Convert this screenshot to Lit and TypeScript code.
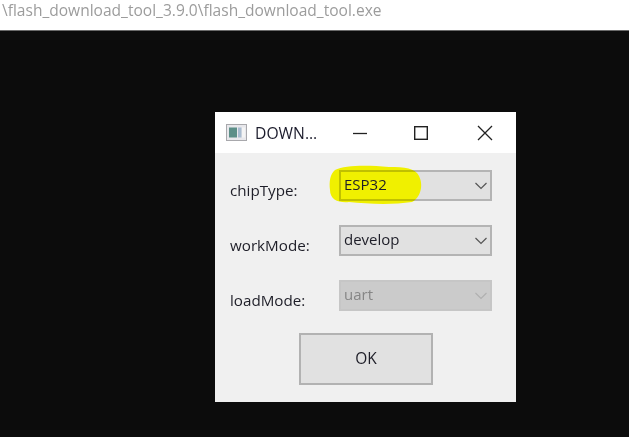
import { LitElement, html, css } from "lit";
import { customElement } from "lit/decorators.js";

const chevron = (color: string) => html`<svg class="chev" width="14" height="8" viewBox="0 0 14 8" fill="none"><path d="M1.5 1 L7 6.5 L12.5 1" stroke=${color} stroke-width="1.2"/></svg>`;

@customElement("app-root")
export class AppRoot extends LitElement {
  static styles = css`
    :host { display: block; width: 629px; height: 437px; overflow: hidden; background: #0c0c0c; font-family: "Open Sans", "Noto Sans", sans-serif; }
    .addr { height: 30px; background: #fff; border-bottom: 1px solid #6a6a6a; padding-left: 2px; font-size: 15.55px; line-height: 21px; color: #9c9c9c; white-space: nowrap; filter: blur(0.35px); }
    .desk { display: flex; padding: 81px 0 0 215px; }
    .win { position: relative; width: 301px; height: 290px; background: #f0f0f0; display: flex; flex-direction: column; filter: blur(0.35px); }
    .title { height: 41px; background: #fff; display: flex; align-items: center; padding-left: 11px; flex: none; }
    .appicon { width: 21px; height: 17px; flex: none; margin-right: 8px; }
    .ttext { font-size: 15.7px; color: #1c1c2c; width: 93px; white-space: nowrap; }
    .winbtn { width: 20px; height: 20px; display: flex; align-items: center; justify-content: center; flex: none; }
    .min { margin-left: 2px; }
    .max { margin-left: 41px; }
    .close { margin-left: 44px; }
    .body { flex: 1; padding: 17px 24px 17px 15px; display: flex; flex-direction: column; }
    .row { display: flex; height: 31px; margin-bottom: 24px; }
    .label { width: 109px; font-size: 15.2px; line-height: 20px; padding-top: 10px; color: #1e1e28; flex: none; }
    .combo { position: relative; width: 153px; height: 31px; box-sizing: border-box; display: flex; align-items: center; justify-content: space-between; padding: 0 4px 3px 5px; font-size: 15px; color: #1e1e28; }
    .combo::before { content: ""; position: absolute; inset: 0; background: #e1e1e1; }
    .combo::after { content: ""; position: absolute; inset: 0; border: 2px solid rgba(0, 0, 0, 0.2); z-index: 2; }
    .combo > * { position: relative; z-index: 2; }
    .combo.off { color: #868686; }
    .combo.off::before { background: #cbcbcb; }
    .combo.off::after { border-color: #c6c6c6; }
    .chev { margin-top: 3px; }
    .ok { align-self: center; margin: -2px 0 0 0; width: 134px; height: 52px; box-sizing: border-box; border: 2px solid #b2b2b2; background: #e1e1e1; font: inherit; font-size: 15.5px; color: #1e1e28; padding: 0 0 2px; position: relative; left: 5px; }
    .mark { position: absolute; left: 112px; top: 50px; width: 100px; height: 46px; z-index: 1; pointer-events: none; }
  `;

  render() {
    return html`
      <div class="addr">\\flash_download_tool_3.9.0\\flash_download_tool.exe</div>
      <div class="desk">
        <div class="win">
          <div class="title">
            <svg class="appicon" viewBox="0 0 21 17">
              <rect x="0.5" y="0.5" width="20" height="16" fill="#e8e8ec" stroke="#a8a8ac"/>
              <rect x="3" y="3.5" width="8" height="10" fill="#5c8f88"/>
              <rect x="12" y="3.5" width="3.5" height="10" fill="#a9bcd0"/>
              <rect x="16" y="3.5" width="3" height="10" fill="#f4f4f4"/>
            </svg>
            <span class="ttext">DOWN...</span>
            <span class="winbtn min"><svg width="16" height="16" viewBox="0 0 16 16"><path d="M1 8.5 H15" stroke="#222" stroke-width="1.3"/></svg></span>
            <span class="winbtn max"><svg width="16" height="16" viewBox="0 0 16 16"><rect x="1.7" y="1.7" width="12.6" height="12.6" fill="none" stroke="#222" stroke-width="1.4"/></svg></span>
            <span class="winbtn close"><svg width="16" height="16" viewBox="0 0 16 16"><path d="M1 1 L15 15 M15 1 L1 15" stroke="#222" stroke-width="1.3"/></svg></span>
          </div>
          <div class="body">
            <div class="row"><div class="label">chipType:</div><div class="combo"><span>ESP32</span>${chevron("#555")}</div></div>
            <div class="row"><div class="label">workMode:</div><div class="combo"><span>develop</span>${chevron("#555")}</div></div>
            <div class="row"><div class="label">loadMode:</div><div class="combo off"><span>uart</span>${chevron("#b0b0b0")}</div></div>
            <button class="ok">OK</button>
          </div>
          <svg class="mark" viewBox="0 0 100 46">
            <path d="M8 8 C18 3 40 3 62 5 C78 5 88 6 92 14 C97 24 93 36 85 40 C66 43 40 42 22 40 C12 41 3 38 3 28 C2 20 3 12 8 8 Z" fill="#f0f000"/>
          </svg>
        </div>
      </div>
    `;
  }
}
